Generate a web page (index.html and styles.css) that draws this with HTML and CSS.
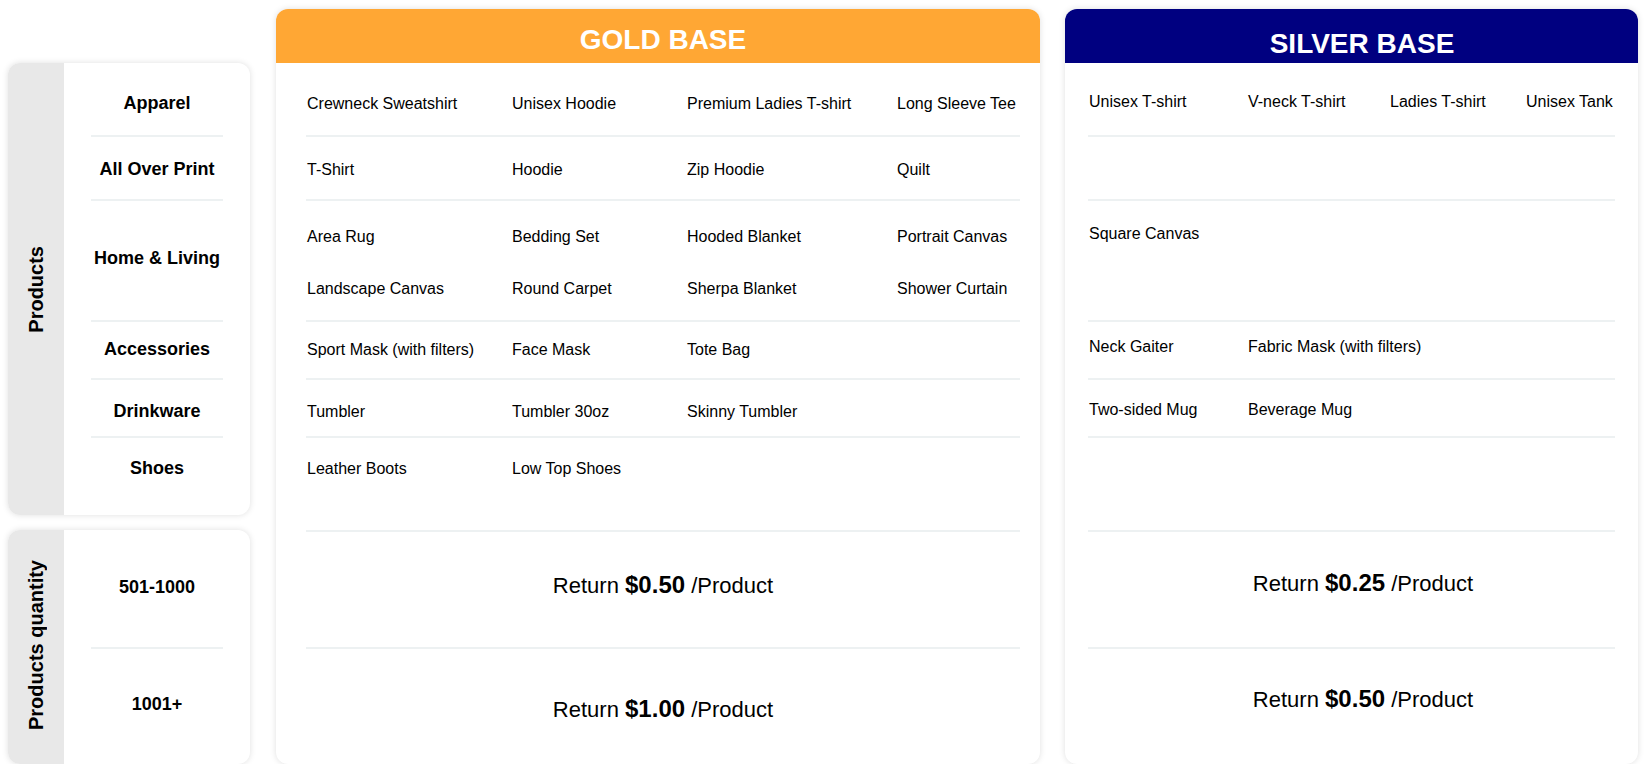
FILE: index.html
```html
<!DOCTYPE html>
<html lang="en">
<head>
<meta charset="utf-8">
<title>Base tiers</title>
<link rel="stylesheet" href="styles.css">
</head>
<body>
<main class="page">
  <aside class="labels">
    <section class="label-card">
      <div class="side"><span class="side-text">Products</span></div>
      <div class="label-list">
        <div class="row r-apparel"><span class="label">Apparel</span></div>
        <div class="row r-aop"><span class="label">All Over Print</span></div>
        <div class="row r-home"><span class="label">Home &amp; Living</span></div>
        <div class="row r-acc"><span class="label">Accessories</span></div>
        <div class="row r-drink"><span class="label">Drinkware</span></div>
        <div class="row r-shoes"><span class="label">Shoes</span></div>
      </div>
    </section>
    <section class="label-card qty-card">
      <div class="side"><span class="side-text">Products quantity</span></div>
      <div class="label-list">
        <div class="row r-q1"><span class="label">501-1000</span></div>
        <div class="row r-q2"><span class="label">1001+</span></div>
      </div>
    </section>
  </aside>

  <section class="tier tier-gold">
    <header class="tier-head"><h2 class="tier-title">GOLD BASE</h2></header>
    <div class="tier-body">
      <div class="row r-apparel">
        <ul class="items">
          <li>Crewneck Sweatshirt</li><li>Unisex Hoodie</li><li>Premium Ladies T-shirt</li><li>Long Sleeve Tee</li>
        </ul>
      </div>
      <div class="row r-aop">
        <ul class="items">
          <li>T-Shirt</li><li>Hoodie</li><li>Zip Hoodie</li><li>Quilt</li>
        </ul>
      </div>
      <div class="row r-home">
        <ul class="items">
          <li>Area Rug</li><li>Bedding Set</li><li>Hooded Blanket</li><li>Portrait Canvas</li>
          <li>Landscape Canvas</li><li>Round Carpet</li><li>Sherpa Blanket</li><li>Shower Curtain</li>
        </ul>
      </div>
      <div class="row r-acc">
        <ul class="items">
          <li>Sport Mask (with filters)</li><li>Face Mask</li><li>Tote Bag</li>
        </ul>
      </div>
      <div class="row r-drink">
        <ul class="items">
          <li>Tumbler</li><li>Tumbler 30oz</li><li>Skinny Tumbler</li>
        </ul>
      </div>
      <div class="row r-shoes">
        <ul class="items">
          <li>Leather Boots</li><li>Low Top Shoes</li>
        </ul>
      </div>
      <div class="row r-ret1"><p class="return">Return <b>$0.50</b> /Product</p></div>
      <div class="row r-ret2"><p class="return">Return <b>$1.00</b> /Product</p></div>
    </div>
  </section>

  <section class="tier tier-silver">
    <header class="tier-head"><h2 class="tier-title">SILVER BASE</h2></header>
    <div class="tier-body">
      <div class="row r-apparel">
        <ul class="items">
          <li>Unisex T-shirt</li><li>V-neck T-shirt</li><li>Ladies T-shirt</li><li>Unisex Tank</li>
        </ul>
      </div>
      <div class="row r-aop"></div>
      <div class="row r-home">
        <ul class="items">
          <li>Square Canvas</li>
        </ul>
      </div>
      <div class="row r-acc">
        <ul class="items">
          <li>Neck Gaiter</li><li>Fabric Mask (with filters)</li>
        </ul>
      </div>
      <div class="row r-drink">
        <ul class="items">
          <li>Two-sided Mug</li><li>Beverage Mug</li>
        </ul>
      </div>
      <div class="row r-shoes"></div>
      <div class="row r-ret1"><p class="return">Return <b>$0.25</b> /Product</p></div>
      <div class="row r-ret2"><p class="return">Return <b>$0.50</b> /Product</p></div>
    </div>
  </section>
</main>
</body>
</html>
```

FILE: styles.css
```css
* {
  box-sizing: border-box;
}

body {
  margin: 0;
  background: #ffffff;
  color: #000000;
  font-family: "Liberation Sans", Arial, sans-serif;
}

.page {
  display: flex;
  align-items: flex-start;
  gap: 26px;
  padding: 9px 9px 0 8px;
}

/* ---------- left label column ---------- */
.labels {
  width: 242px;
  margin-top: 54px;
  display: flex;
  flex-direction: column;
  gap: 15px;
}

.label-card {
  display: flex;
  background: #ffffff;
  border-radius: 12px;
  overflow: hidden;
  box-shadow: 0 0 6px rgba(0, 0, 0, 0.13);
}

.side {
  width: 56px;
  flex: none;
  background: #e8e8e8;
  display: flex;
  align-items: center;
  justify-content: center;
}

.side-text {
  writing-mode: vertical-rl;
  transform: rotate(180deg);
  font-size: 20px;
  font-weight: 700;
  line-height: 24px;
  white-space: nowrap;
}

.qty-card .side-text {
  margin-bottom: 4px;
}

.label-list {
  flex: 1;
  display: flex;
  flex-direction: column;
  padding: 0 27px;
}

.label {
  display: block;
  text-align: center;
  font-size: 18px;
  font-weight: 700;
  line-height: 20px;
}

/* ---------- shared rows ---------- */
.row {
  border-bottom: 2px solid #edf1f2;
  flex: none;
}

.row:last-child {
  border-bottom: none;
}

.r-apparel { height: 74px; padding-top: 31px; }
.r-aop     { height: 64px; padding-top: 23px; }
.r-home    { height: 121px; padding-top: 26px; }
.r-acc     { height: 58px; padding-top: 18px; }
.r-drink   { height: 58px; padding-top: 22px; }
.r-shoes   { height: 94px; padding-top: 21px; }
.r-ret1    { height: 117px; padding-top: 40px; }
.r-ret2    { height: 115px; padding-top: 47px; }

.label-card .r-apparel { padding-top: 30px; }
.label-card .r-aop     { padding-top: 22px; }
.label-card .r-home    { padding-top: 47px; }
.label-card .r-acc     { padding-top: 17px; }
.label-card .r-drink   { padding-top: 21px; }
.label-card .r-shoes   { height: 77px; padding-top: 20px; }
.r-q1 { height: 119px; padding-top: 47px; }
.r-q2 { height: 115px; padding-top: 45px; }

/* ---------- tier cards ---------- */
.tier {
  background: #ffffff;
  border-radius: 12px;
  overflow: hidden;
  box-shadow: 0 0 6px rgba(0, 0, 0, 0.13);
  display: flex;
  flex-direction: column;
}

.tier-gold { width: 764px; }
.tier-silver { width: 573px; margin-left: -1px; }

.tier-head {
  height: 54px;
}

.tier-gold .tier-head { background: #ffa734; padding: 15px 0 0 10px; }
.tier-silver .tier-head { background: #000080; padding: 19px 0 0 21px; }

.tier-title {
  margin: 0;
  text-align: center;
  color: #ffffff;
  font-size: 28px;
  font-weight: 700;
  line-height: 32px;
}

.tier-body {
  display: flex;
  flex-direction: column;
}

.tier-gold .tier-body { padding: 0 20px 0 30px; }
.tier-silver .tier-body { padding: 0 23px 0 23px; }

.items {
  list-style: none;
  margin: 0;
  padding: 0;
  display: grid;
  row-gap: 32px;
  font-size: 16px;
  line-height: 20px;
  white-space: nowrap;
}

.tier-gold .items { grid-template-columns: 205px 175px 210px 1fr; padding-left: 1px; }
.tier-silver .items { grid-template-columns: 159px 142px 136px 1fr; padding-left: 1px; }

.tier-silver .r-apparel { padding-top: 29px; }
.tier-silver .r-home    { padding-top: 23px; }
.tier-silver .r-acc     { padding-top: 15px; }
.tier-silver .r-drink   { padding-top: 20px; }
.tier-silver .r-ret1    { padding-top: 38px; }
.tier-silver .r-ret2    { padding-top: 37px; }

.return {
  margin: 0;
  text-align: center;
  font-size: 22px;
  line-height: 26px;
  white-space: nowrap;
}

.return b {
  font-size: 24px;
  font-weight: 700;
}

.tier-silver .return {
  padding-left: 23px;
}
```
